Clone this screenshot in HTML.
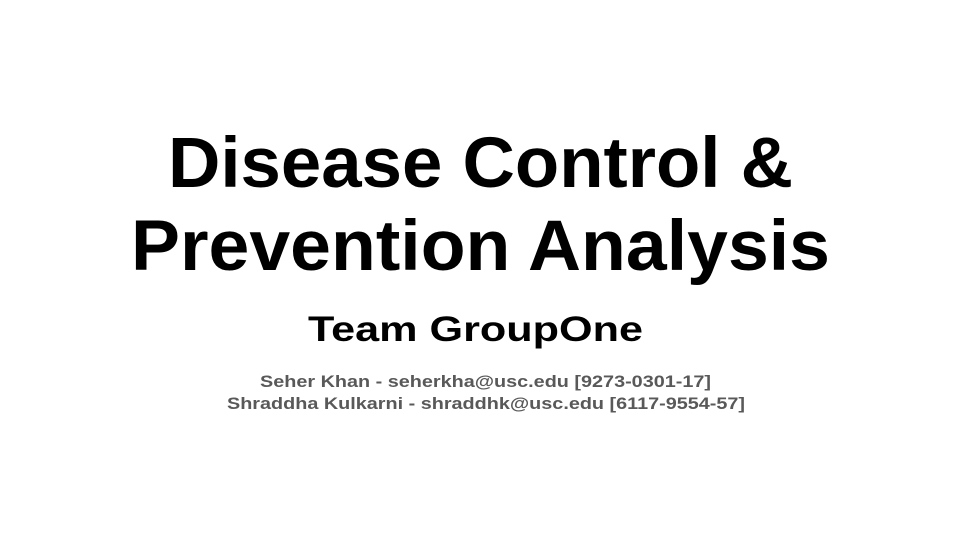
<!DOCTYPE html>
<html><head><meta charset="utf-8"><style>
html,body{margin:0;padding:0;background:#fff;}
svg{display:block;}
</style></head><body>
<svg width="960" height="540" viewBox="0 0 960 540" xmlns="http://www.w3.org/2000/svg">
<rect width="960" height="540" fill="#fff"/>
<g font-family="Liberation Sans, sans-serif" font-weight="bold">
<text x="168" y="187" font-size="71" fill="#000" textLength="625" lengthAdjust="spacingAndGlyphs">Disease Control &amp;</text>
<text x="131" y="270" font-size="71" fill="#000" textLength="699" lengthAdjust="spacingAndGlyphs">Prevention Analysis</text>
<text x="308" y="341" font-size="35" fill="#000" textLength="335" lengthAdjust="spacingAndGlyphs">Team GroupOne</text>
<text x="260" y="387" font-size="17" fill="#595959" textLength="451" lengthAdjust="spacingAndGlyphs">Seher Khan - seherkha@usc.edu [9273-0301-17]</text>
<text x="227" y="409" font-size="17" fill="#595959" textLength="518" lengthAdjust="spacingAndGlyphs">Shraddha Kulkarni - shraddhk@usc.edu [6117-9554-57]</text>
</g>
</svg>
</body></html>
